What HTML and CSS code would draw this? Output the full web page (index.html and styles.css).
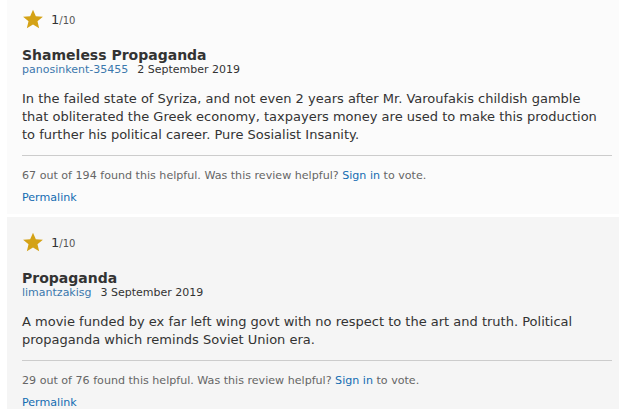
FILE: index.html
```html
<!DOCTYPE html>
<html>
<head>
<meta charset="utf-8">
<link rel="stylesheet" href="styles.css">
</head>
<body>
<div class="reviews">
  <div class="review light">
    <div class="rating">
      <svg class="star" viewBox="0 0 24 24" width="22" height="22"><path d="M12 1.8l3.1 7.1 7.7.6-5.9 5 1.8 7.6L12 18l-6.7 4.1 1.8-7.6-5.9-5 7.7-.6z" fill="#d4a216"/></svg>
      <span class="score">1</span><span class="outof">/10</span>
    </div>
    <div class="title">Shameless Propaganda</div>
    <div class="meta"><a class="user">panosinkent-35455</a><span class="date">2 September 2019</span></div>
    <div class="text">In the failed state of Syriza, and not even 2 years after Mr. Varoufakis childish gamble that obliterated the Greek economy, taxpayers money are used to make this production to further his political career. Pure Sosialist Insanity.</div>
    <div class="actions">67 out of 194 found this helpful. Was this review helpful? <a class="link">Sign in</a> to vote.</div>
    <div class="permalink"><a class="link">Permalink</a></div>
  </div>
  <div class="review dark">
    <div class="rating">
      <svg class="star" viewBox="0 0 24 24" width="22" height="22"><path d="M12 1.8l3.1 7.1 7.7.6-5.9 5 1.8 7.6L12 18l-6.7 4.1 1.8-7.6-5.9-5 7.7-.6z" fill="#d4a216"/></svg>
      <span class="score">1</span><span class="outof">/10</span>
    </div>
    <div class="title">Propaganda</div>
    <div class="meta"><a class="user">limantzakisg</a><span class="date">3 September 2019</span></div>
    <div class="text">A movie funded by ex far left wing govt with no respect to the art and truth. Political propaganda which reminds Soviet Union era.</div>
    <div class="actions">29 out of 76 found this helpful. Was this review helpful? <a class="link">Sign in</a> to vote.</div>
    <div class="permalink"><a class="link">Permalink</a></div>
  </div>
</div>
</body>
</html>
```

FILE: styles.css
```css
html, body {
  margin: 0;
  padding: 0;
  background: #ffffff;
  overflow: hidden;
}
body {
  font-family: "DejaVu Sans", Verdana, sans-serif;
  color: #333333;
}
.reviews {
  margin: -6px 0 0 7px;
  display: flex;
  flex-direction: column;
  gap: 3px;
}
.review {
  padding: 15px 7px 16px 15px;
  height: 189px;
}
.review.light { background: #fbfbfb; }
.review.dark { background: #f5f5f5; }
.rating {
  display: flex;
  align-items: center;
  height: 20px;
}
.star {
  margin-right: 7px;
}
.score {
  font-size: 13px;
  color: #333;
}
.outof {
  font-size: 10px;
  color: #555;
  margin-top: 2px;
}
.title {
  margin-top: 18px;
  font-size: 14px;
  font-weight: bold;
  line-height: 16px;
  color: #333;
}
.meta {
  font-size: 11px;
  line-height: 14px;
  color: #333;
}
.user {
  color: #3b78ad;
  margin-right: 9px;
}
.text {
  margin-top: 13px;
  font-size: 13px;
  line-height: 18px;
  color: #333;
  padding: 0 5px 11px 0;
  border-bottom: 1px solid #cccccc;
}
.actions {
  margin-top: 13px;
  font-size: 11.1px;
  line-height: 14px;
  color: #666;
}
.permalink {
  margin-top: 8px;
  font-size: 11.1px;
  line-height: 14px;
}
.link { color: #136cb2; }
```
